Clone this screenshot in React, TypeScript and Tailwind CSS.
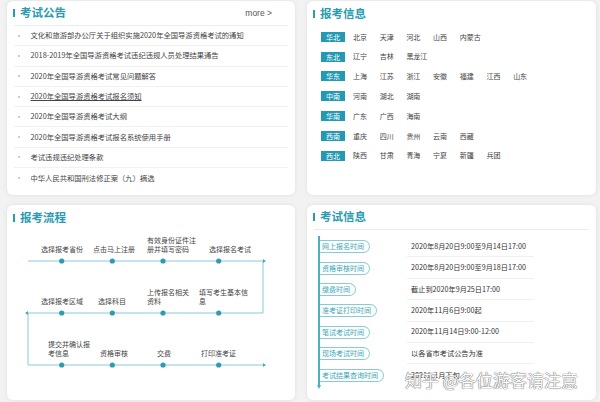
import React from "react"

const font = "font-['Noto_Sans_CJK_SC','Noto_Sans',sans-serif]"

const notices = [
  "文化和旅游部办公厅关于组织实施2020年全国导游资格考试的通知",
  "2018-2019年全国导游资格考试违纪违规人员处理结果通告",
  "2020年全国导游资格考试常见问题解答",
  "2020年全国导游资格考试报名须知",
  "2020年全国导游资格考试大纲",
  "2020年全国导游资格考试报名系统使用手册",
  "考试违规违纪处理条款",
  "中华人民共和国刑法修正案（九）摘选",
]

const regions: [string, string[]][] = [
  ["华北", ["北京", "天津", "河北", "山西", "内蒙古"]],
  ["东北", ["辽宁", "吉林", "黑龙江"]],
  ["华东", ["上海", "江苏", "浙江", "安徽", "福建", "江西", "山东"]],
  ["中南", ["河南", "湖北", "湖南"]],
  ["华南", ["广东", "广西", "海南"]],
  ["西南", ["重庆", "四川", "贵州", "云南", "西藏"]],
  ["西北", ["陕西", "甘肃", "青海", "宁夏", "新疆", "兵团"]],
]

const schedule = [
  ["网上报名时间", "2020年8月20日9:00至9月14日17:00"],
  ["资格审核时间", "2020年8月20日9:00至9月18日17:00"],
  ["缴费时间", "截止到2020年9月25日17:00"],
  ["准考证打印时间", "2020年11月6日9:00起"],
  ["笔试考试时间", "2020年11月14日9:00-12:00"],
  ["现场考试时间", "以各省市考试公告为准"],
  ["考试结果查询时间", "2021年1月下旬"],
]

// flow chart labels, positioned on the diagram canvas
const steps = [
  { lines: ["选择报考省份"], cls: "left-[34px] top-[13.5px]" },
  { lines: ["点击马上注册"], cls: "left-[86px] top-[13.5px]" },
  { lines: ["有效身份证件注", "册并填写密码"], cls: "left-[140px] top-[4.5px]" },
  { lines: ["选择报名考试"], cls: "left-[202px] top-[13.5px]" },
  { lines: ["选择报考区域"], cls: "left-[34px] top-[65.5px]" },
  { lines: ["选择科目"], cls: "left-[91px] top-[65.5px]" },
  { lines: ["上传报名相关", "资料"], cls: "left-[140px] top-[56.5px]" },
  { lines: ["填写考生基本信", "息"], cls: "left-[192px] top-[56.5px]" },
  { lines: ["提交并确认报", "考信息"], cls: "left-[41px] top-[108.5px]" },
  { lines: ["资格审核"], cls: "left-[93px] top-[117.5px]" },
  { lines: ["交费"], cls: "left-[150px] top-[117.5px]" },
  { lines: ["打印准考证"], cls: "left-[194px] top-[117.5px]" },
]

function Title({ text }: { text: string }) {
  return (
    <div className="flex items-center gap-[5px]">
      <span className="w-[2px] h-[8px] bg-[#2a9bb0]" />
      <span className="text-[11.5px] leading-none font-bold text-[#2a9bb0]">{text}</span>
    </div>
  )
}

function Card({ children }: { children: React.ReactNode }) {
  return (
    <div className="relative bg-white rounded-[6px] shadow-[0_0_4px_rgba(0,0,0,0.08)] flex flex-col overflow-hidden">
      {children}
    </div>
  )
}

export default function App() {
  const xs = [54.7, 105.3, 156, 211.7]
  const ys = [30, 82, 134]
  return (
    <div
      className={`${font} relative w-[600px] h-[402px] bg-[#f2f2f2] pl-[7px] pr-[4px] pt-[1px] grid grid-cols-[288px_289px] grid-rows-[194px_195px] gap-x-[12px] gap-y-[10px]`}
    >
      {/* 考试公告 */}
      <Card>
        <div className="h-[25px] mx-[7px] flex items-center justify-between pl-[-1px] border-b border-[#ececec]">
          <div className="-ml-[1px]">
            <Title text="考试公告" />
          </div>
          <span className="text-[8.5px] text-[#555] mr-[16px] font-['Liberation_Sans',sans-serif]">more &gt;</span>
        </div>
        <ul className="mx-[7px]">
          {notices.map((n, i) => (
            <li
              key={n}
              className={`h-[20.3px] flex items-center border-[#f1f1f1] ${i < notices.length - 1 ? "border-b" : ""}`}
            >
              <span className="ml-[3.5px] w-[2px] h-[2px] rounded-full bg-[#bbb]" />
              <span
                className={`ml-[11px] text-[7.3px] text-[#444] whitespace-nowrap ${i === 3 ? "underline underline-offset-1" : ""}`}
              >
                {n}
              </span>
            </li>
          ))}
        </ul>
      </Card>

      {/* 报考信息 */}
      <Card>
        <div className="h-[26px] pl-[6px] flex items-center">
          <Title text="报考信息" />
        </div>
        <div className="pl-[14px]">
          {regions.map(([r, ps]) => (
            <div key={r} className="h-[19.8px] flex items-center">
              <span className="w-[24px] h-[10px] bg-[#2499b3] text-white text-[7px] leading-[10px] text-center">{r}</span>
              <div className="ml-[8px] flex">
                {ps.map((p) => (
                  <span key={p} className="w-[26.7px] text-[7px] text-[#444] whitespace-nowrap">
                    {p}
                  </span>
                ))}
              </div>
            </div>
          ))}
        </div>
      </Card>

      {/* 报考流程 */}
      <Card>
        <div className="h-[26px] pl-[6px] flex items-center">
          <Title text="报考流程" />
        </div>
        <div className="relative h-[164px]">
          <svg className="absolute inset-0" width="288" height="164" viewBox="0 0 288 164">
            <g stroke="#8ccad6" strokeWidth="1" fill="none">
              <polyline points="21,30 256,30 256,82 21,82 21,134 256,134" />
            </g>
            <g fill="#4aa9bd">
              <polygon points="256,28 259,30 256,32" />
              <polygon points="21,80 18,82 21,84" />
              <polygon points="256,132 259,134 256,136" />
            </g>
            {ys.map((y) =>
              xs.map((x) => <circle key={`${x}-${y}`} cx={x} cy={y} r="2.6" fill="#2e9bb2" />)
            )}
          </svg>
          {steps.map((s) => (
            <div key={s.lines[0]} className={`absolute ${s.cls} text-[7px] leading-[9px] text-[#444] whitespace-nowrap`}>
              {s.lines.map((l) => (
                <div key={l}>{l}</div>
              ))}
            </div>
          ))}
        </div>
      </Card>

      {/* 考试信息 */}
      <Card>
        <div className="h-[25px] mx-[7px] flex items-center border-b border-[#ececec]">
          <div className="-ml-[1px]">
            <Title text="考试信息" />
          </div>
        </div>
        <div className="relative flex pt-[6px]">
          <div className="ml-[11px] w-[80px] border-l-2 border-[#4cb0c2]">
            {schedule.map(([k]) => (
              <div key={k} className="h-[21.4px] flex items-center">
                <span className="h-[13px] pl-[2px] pr-[5px] border border-l-0 border-[#86cbd7] rounded-r-full text-[7px] leading-[11px] text-[#3aa6b9] whitespace-nowrap flex items-center">
                  {k}
                </span>
              </div>
            ))}
          </div>
          <span className="absolute left-[10px] top-[155px] w-0 h-0 border-x-[2.5px] border-x-transparent border-t-[4px] border-t-[#4cb0c2]" />
          <div className="ml-[9px] w-[127px]">
            {schedule.map(([k, v], i) => (
              <div
                key={k}
                className={`h-[21.4px] flex items-center pl-[4px] border-[#f0f0f0] ${i < schedule.length - 1 ? "border-b" : ""}`}
              >
                <span className="text-[7.2px] text-[#333] whitespace-nowrap">{v}</span>
              </div>
            ))}
          </div>
        </div>
      </Card>

      {/* watermark */}
      <div className="absolute left-[405px] top-[369px] text-[17px] leading-[22px] text-white whitespace-nowrap [text-shadow:0_0_1px_#555,0_0_1px_#555]">
        知乎 @各位游客请注意
      </div>
    </div>
  )
}
